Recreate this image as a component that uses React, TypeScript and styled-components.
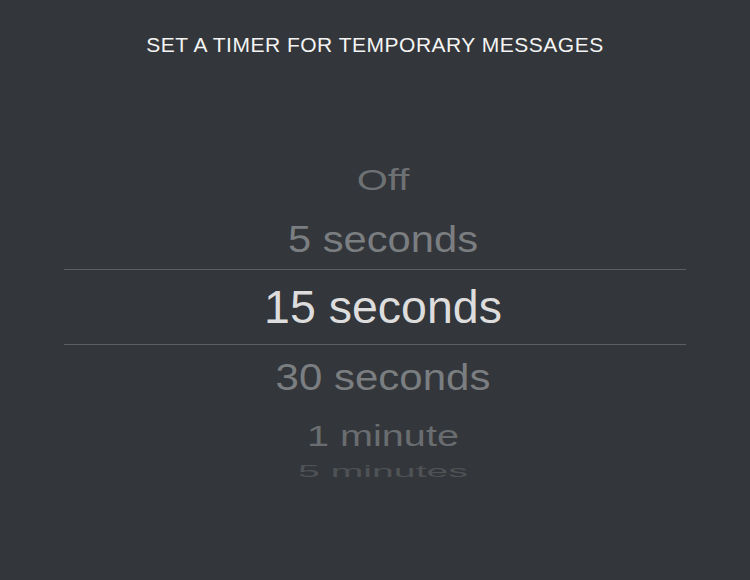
import React from "react"
import styled, { createGlobalStyle } from "styled-components"

const GlobalStyle = createGlobalStyle`
  html, body {
    margin: 0;
    padding: 0;
    background: #33363a;
  }
  body {
    font-family: "Liberation Sans", Arial, sans-serif;
  }
`

interface Row {
  label: string
  height: number
  size: number
  squash: number
  color: string
}

const above: Row[] = [
  { label: "Off", height: 56, size: 40, squash: 0.74, color: "#6e7174" },
  { label: "5 seconds", height: 61, size: 41.7, squash: 0.9, color: "#7b7e81" },
]

const below: Row[] = [
  { label: "30 seconds", height: 64, size: 42, squash: 0.9, color: "#7b7e81" },
  { label: "1 minute", height: 54, size: 39.6, squash: 0.75, color: "#6a6d70" },
  { label: "5 minutes", height: 18, size: 39.2, squash: 0.43, color: "#4f5255" },
]

const App: React.FC = () => (
  <Screen>
    <GlobalStyle />
    <Title>SET A TIMER FOR TEMPORARY MESSAGES</Title>
    <Picker>
      {above.map((r) => (
        <Option key={r.label} $height={r.height}>
          <Label $size={r.size} $squash={r.squash} $color={r.color}>
            {r.label}
          </Label>
        </Option>
      ))}
      <Selected>
        <Label $size={46.5} $squash={1} $color="#dddddd">
          15 seconds
        </Label>
      </Selected>
      {below.map((r) => (
        <Option key={r.label} $height={r.height}>
          <Label $size={r.size} $squash={r.squash} $color={r.color}>
            {r.label}
          </Label>
        </Option>
      ))}
    </Picker>
  </Screen>
)

export default App

const Screen = styled.div`
  width: 750px;
  height: 580px;
  background: #33363a;
  display: flex;
  flex-direction: column;
  align-items: center;
  overflow: hidden;
`
const Title = styled.div`
  margin-top: 34px;
  font-size: 21px;
  line-height: 1;
  letter-spacing: 0.5px;
  color: #f4f4f4;
`
const Picker = styled.div`
  margin-top: 97px;
  width: 622px;
  display: flex;
  flex-direction: column;
`
const Option = styled.div<{ $height: number }>`
  height: ${(p) => p.$height}px;
  display: flex;
  align-items: center;
  justify-content: center;
  padding-left: 16px;
  overflow: visible;
`
const Selected = styled.div`
  height: 74px;
  border-top: 1px solid #5c6064;
  border-bottom: 1px solid #5c6064;
  display: flex;
  align-items: center;
  justify-content: center;
  padding-left: 16px;
`
const Label = styled.span<{ $size: number; $squash: number; $color: string }>`
  font-size: ${(p) => p.$size}px;
  line-height: 1;
  color: ${(p) => p.$color};
  white-space: nowrap;
  transform: scaleY(${(p) => p.$squash});
`
